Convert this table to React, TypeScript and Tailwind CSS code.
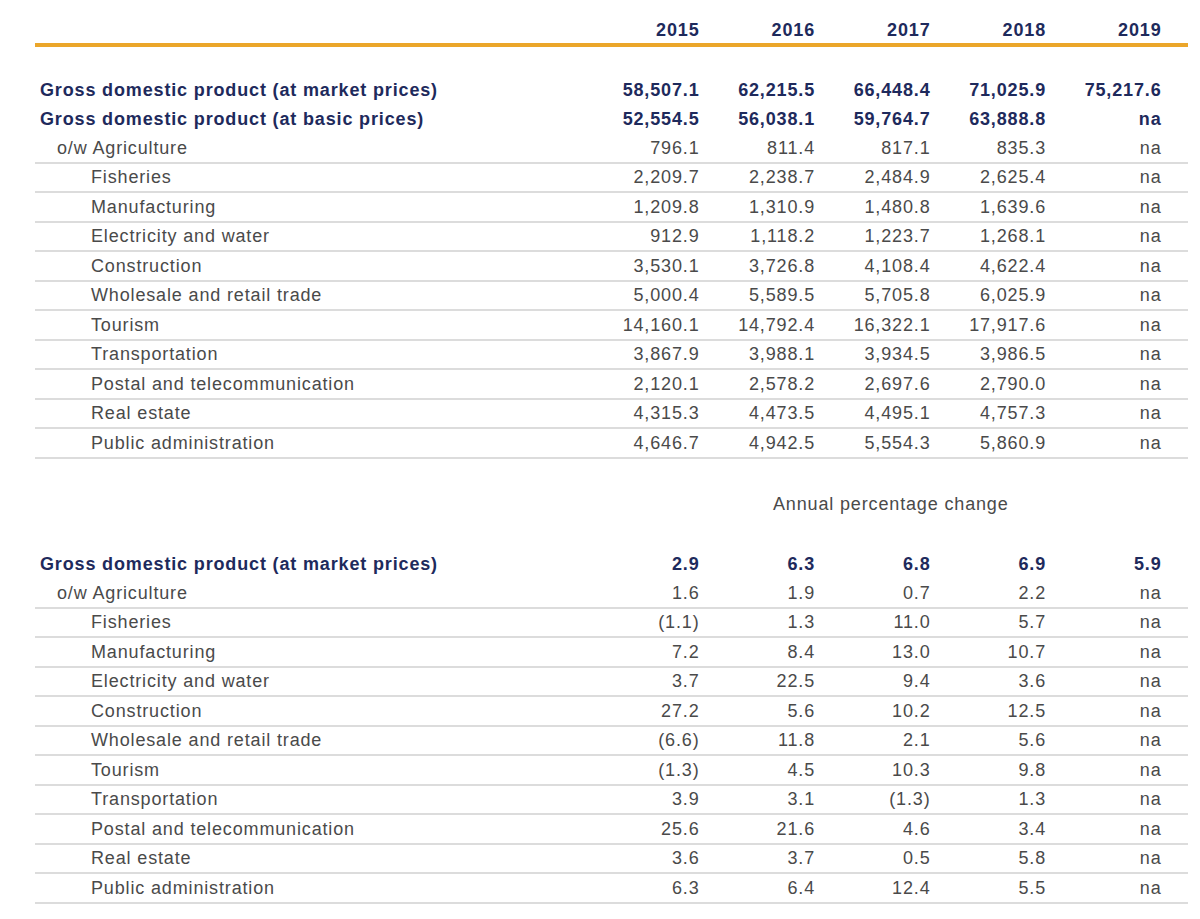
import React from "react";

type Row = {
  label: string;
  values: string[];
  level: 0 | 1 | 2;
};

const years = ["2015", "2016", "2017", "2018", "2019"];

const levels: Row[] = [
  { label: "Gross domestic product (at market prices)", values: ["58,507.1", "62,215.5", "66,448.4", "71,025.9", "75,217.6"], level: 0 },
  { label: "Gross domestic product (at basic prices)", values: ["52,554.5", "56,038.1", "59,764.7", "63,888.8", "na"], level: 0 },
  { label: "o/w Agriculture", values: ["796.1", "811.4", "817.1", "835.3", "na"], level: 1 },
  { label: "Fisheries", values: ["2,209.7", "2,238.7", "2,484.9", "2,625.4", "na"], level: 2 },
  { label: "Manufacturing", values: ["1,209.8", "1,310.9", "1,480.8", "1,639.6", "na"], level: 2 },
  { label: "Electricity and water", values: ["912.9", "1,118.2", "1,223.7", "1,268.1", "na"], level: 2 },
  { label: "Construction", values: ["3,530.1", "3,726.8", "4,108.4", "4,622.4", "na"], level: 2 },
  { label: "Wholesale and retail trade", values: ["5,000.4", "5,589.5", "5,705.8", "6,025.9", "na"], level: 2 },
  { label: "Tourism", values: ["14,160.1", "14,792.4", "16,322.1", "17,917.6", "na"], level: 2 },
  { label: "Transportation", values: ["3,867.9", "3,988.1", "3,934.5", "3,986.5", "na"], level: 2 },
  { label: "Postal and telecommunication", values: ["2,120.1", "2,578.2", "2,697.6", "2,790.0", "na"], level: 2 },
  { label: "Real estate", values: ["4,315.3", "4,473.5", "4,495.1", "4,757.3", "na"], level: 2 },
  { label: "Public administration", values: ["4,646.7", "4,942.5", "5,554.3", "5,860.9", "na"], level: 2 },
];

const changes: Row[] = [
  { label: "Gross domestic product (at market prices)", values: ["2.9", "6.3", "6.8", "6.9", "5.9"], level: 0 },
  { label: "o/w Agriculture", values: ["1.6", "1.9", "0.7", "2.2", "na"], level: 1 },
  { label: "Fisheries", values: ["(1.1)", "1.3", "11.0", "5.7", "na"], level: 2 },
  { label: "Manufacturing", values: ["7.2", "8.4", "13.0", "10.7", "na"], level: 2 },
  { label: "Electricity and water", values: ["3.7", "22.5", "9.4", "3.6", "na"], level: 2 },
  { label: "Construction", values: ["27.2", "5.6", "10.2", "12.5", "na"], level: 2 },
  { label: "Wholesale and retail trade", values: ["(6.6)", "11.8", "2.1", "5.6", "na"], level: 2 },
  { label: "Tourism", values: ["(1.3)", "4.5", "10.3", "9.8", "na"], level: 2 },
  { label: "Transportation", values: ["3.9", "3.1", "(1.3)", "1.3", "na"], level: 2 },
  { label: "Postal and telecommunication", values: ["25.6", "21.6", "4.6", "3.4", "na"], level: 2 },
  { label: "Real estate", values: ["3.6", "3.7", "0.5", "5.8", "na"], level: 2 },
  { label: "Public administration", values: ["6.3", "6.4", "12.4", "5.5", "na"], level: 2 },
];

function TableRow({ row }: { row: Row }) {
  const bold = row.level === 0;
  const pad = row.level === 0 ? "pl-[5px]" : row.level === 1 ? "pl-[22px]" : "pl-[56px]";
  return (
    <div
      className={`flex items-center h-[29.5px] ${
        bold ? "font-bold text-[#1e2a5c]" : "text-[#4a4a4a] border-b-2 border-[#dcdcdc]"
      }`}
    >
      <div className={`w-[549px] ${pad} whitespace-nowrap`}>{row.label}</div>
      {row.values.map((v, i) => (
        <div key={i} className="w-[115.5px] text-right">
          {v}
        </div>
      ))}
    </div>
  );
}

export default function App() {
  return (
    <div
      className="w-[1200px] h-[919px] bg-white overflow-hidden text-[18px] tracking-[0.85px] leading-none"
      style={{ fontFamily: '"Liberation Sans", Arial, sans-serif' }}
    >
      <div className="ml-[35px] w-[1153px]">
        {/* year header */}
        <div className="flex pt-[21px] pb-[4px] font-bold text-[#1e2a5c] border-b-4 border-[#eba62a]">
          <div className="w-[549px]" />
          {years.map((y) => (
            <div key={y} className="w-[115.5px] text-right">
              {y}
            </div>
          ))}
        </div>

        <div className="h-[28px]" />
        {levels.map((r, i) => (
          <TableRow key={i} row={r} />
        ))}

        <div className="h-[91px] flex items-center pl-[738px] text-[#4a4a4a]">
          Annual percentage change
        </div>

        {changes.map((r, i) => (
          <TableRow key={i} row={r} />
        ))}
      </div>
    </div>
  );
}
